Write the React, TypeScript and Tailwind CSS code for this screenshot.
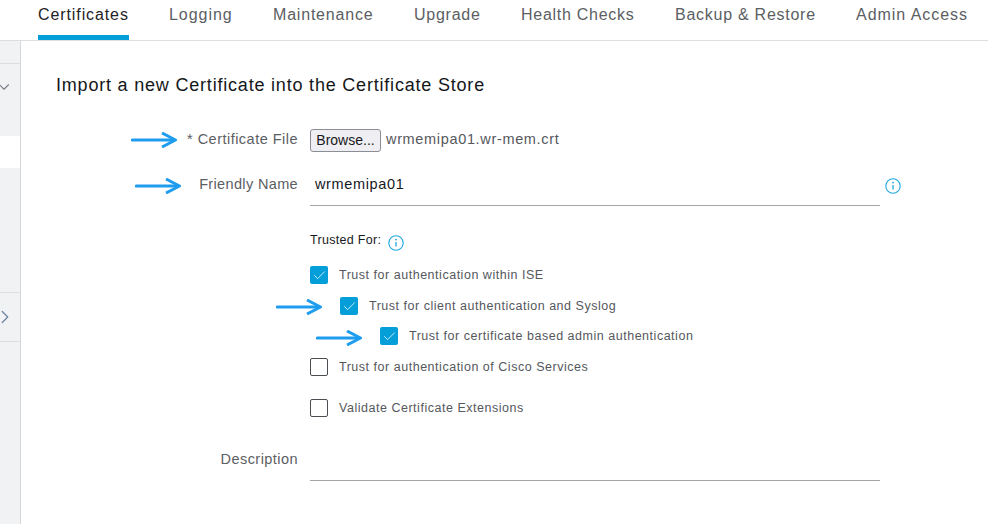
import { Check, ChevronDown, ChevronRight } from 'lucide-react'
import clsx from 'clsx'

const TABS = [
  { name: 'Certificates', w: 'w-[91px]', ml: 'ml-[38px]', ls: 'tracking-[0.9px]' },
  { name: 'Logging', w: 'w-[63px]', ml: 'ml-[40px]', ls: 'tracking-[0.95px]' },
  { name: 'Maintenance', w: 'w-[100px]', ml: 'ml-[41px]', ls: 'tracking-[0.8px]' },
  { name: 'Upgrade', w: 'w-[67px]', ml: 'ml-[41px]', ls: 'tracking-[0.75px]' },
  { name: 'Health Checks', w: 'w-[114px]', ml: 'ml-[40px]', ls: 'tracking-[0.72px]' },
  { name: 'Backup & Restore', w: 'w-[140px]', ml: 'ml-[40px]', ls: 'tracking-[0.74px]' },
  { name: 'Admin Access', w: 'w-[112px]', ml: 'ml-[41px]', ls: 'tracking-[0.96px]' },
]

function Arrow({ className }: { className: string }) {
  return (
    <svg className={clsx('absolute', className)} width="46" height="16" viewBox="0 0 46 16" fill="none">
      <path d="M1.5 8H43" stroke="#1e9cee" strokeWidth="3.2" strokeLinecap="round" />
      <path d="M31 1L44.5 8L31 15" stroke="#1e9cee" strokeWidth="3" strokeLinejoin="round" />
    </svg>
  )
}

function InfoIcon({ className }: { className?: string }) {
  return (
    <svg className={className} width="16" height="16" viewBox="0 0 16 16" fill="none">
      <circle cx="8" cy="8" r="7.2" stroke="#1ea7df" strokeWidth="1.1" />
      <circle cx="8" cy="4.6" r="0.9" fill="#1ea7df" />
      <path d="M8 7V11.6" stroke="#1ea7df" strokeWidth="1.3" />
    </svg>
  )
}

function Box({ label, checked, className }: { label: string; checked?: boolean; className: string }) {
  return (
    <div className={clsx('flex items-center h-[18px]', className)}>
      <div
        className={clsx(
          'w-[18px] h-[18px] rounded-[2px] flex items-center justify-center shrink-0',
          checked ? 'bg-[#049fd9]' : 'border border-[#4a4d52] bg-white'
        )}
      >
        {checked && <Check size={15} strokeWidth={1.4} color="#dff3fb" />}
      </div>
      <span className="ml-[11px] text-[12.5px] tracking-[0.52px] text-[#55585d] whitespace-nowrap">{label}</span>
    </div>
  )
}

export default function App() {
  return (
    <div className="relative w-[988px] h-[524px] overflow-hidden bg-white font-['Liberation_Sans',sans-serif]">
      {/* Tabs */}
      <div className="flex h-[41px] border-b border-[#dcdee0]">
        {TABS.map((t, i) => (
          <div
            key={t.name}
            className={clsx(
              'h-[40px] pt-[3px] text-[16px] whitespace-nowrap shrink-0',
              t.w,
              t.ml,
              t.ls,
              i === 0 ? 'border-b-[5px] border-[#049fd9] text-[#1f2226]' : 'text-[#5b5e63]'
            )}
          >
            {t.name}
          </div>
        ))}
      </div>

      <div className="flex h-[483px]">
        {/* Sidebar */}
        <div className="w-[21px] shrink-0 bg-[#f1f2f4] border-r border-[#d5d7da] flex flex-col overflow-hidden">
          <div className="h-[23px] border-b border-[#dcdee0]" />
          <div className="h-[72px] pt-[14px] -ml-[5px]">
            <ChevronDown size={18} strokeWidth={1.5} color="#7c8187" />
          </div>
          <div className="h-[32px] bg-white" />
          <div className="h-[125px] border-b border-[#dcdee0]" />
          <div className="h-[49px] pt-[13px] border-b border-[#dcdee0]">
            <ChevronRight size={22} strokeWidth={1.4} color="#6f86a0" className="-ml-[6px]" />
          </div>
        </div>

        {/* Form */}
        <div className="flex-1">
          <h1 className="ml-[35px] mt-[33px] text-[18px] leading-[22px] tracking-[0.8px] text-[#14171a]">
            Import a new Certificate into the Certificate Store
          </h1>

          <div className="flex items-center mt-[32px] h-[24px]">
            <div className="w-[277px] text-right text-[14.5px] tracking-[0.48px] text-[#5b5e63]">* Certificate File</div>
            <div className="ml-[12px] w-[71px] h-[23px] rounded-[3px] border border-[#8b8e94] bg-[#efeff3] text-center text-[14px] leading-[21px] text-[#17191c]">
              Browse...
            </div>
            <span className="ml-[5px] text-[14.5px] tracking-[0.66px] text-[#55585d]">wrmemipa01.wr-mem.crt</span>
          </div>

          <div className="flex mt-[21px]">
            <div className="w-[277px] text-right text-[14.5px] tracking-[0.35px] text-[#5b5e63] pt-[1px]">Friendly Name</div>
            <div className="ml-[12px] w-[570px] h-[33px] border-b border-[#a3a5a8] pl-[5px] pt-[1px] text-[14.5px] tracking-[0.64px] text-[#17191c]">
              wrmemipa01
            </div>
            <InfoIcon className="ml-[5px] mt-[5px]" />
          </div>

          <div className="ml-[289px]">
            <div className="flex items-center mt-[25px] h-[18px]">
              <span className="text-[12.5px] tracking-[0.3px] text-[#17191c]">Trusted For:</span>
              <InfoIcon className="ml-[7px] mt-[5px]" />
            </div>
            <Box className="mt-[17px]" label="Trust for authentication within ISE" checked />
            <Box className="mt-[13px] ml-[30px]" label="Trust for client authentication and Syslog" checked />
            <Box className="mt-[12px] ml-[70px]" label="Trust for certificate based admin authentication" checked />
            <Box className="mt-[13px]" label="Trust for authentication of Cisco Services" />
            <Box className="mt-[23px]" label="Validate Certificate Extensions" />
          </div>

          <div className="flex mt-[31px]">
            <div className="w-[277px] text-right text-[14.5px] tracking-[0.45px] text-[#5b5e63] pt-[1px]">Description</div>
            <div className="ml-[12px] w-[570px] h-[33px] border-b border-[#a3a5a8]" />
          </div>
        </div>
      </div>

      {/* Annotation arrows */}
      <Arrow className="left-[131px] top-[132px]" />
      <Arrow className="left-[135px] top-[178px]" />
      <Arrow className="left-[276px] top-[299px]" />
      <Arrow className="left-[316px] top-[330px]" />
    </div>
  )
}
